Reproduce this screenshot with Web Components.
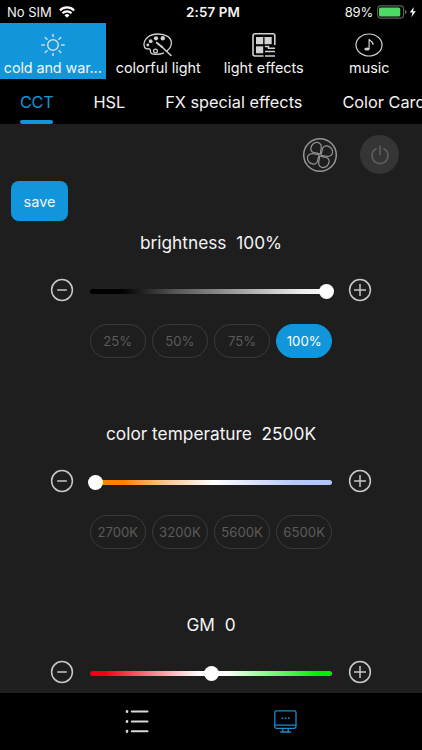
<!DOCTYPE html>
<html lang="en">
<head>
<meta charset="utf-8">
<meta name="viewport" content="width=device-width, initial-scale=1">
<title>Light Control</title>
<style>
  html, body { margin: 0; height: 100%; background: #000; }
  body {
    font-family: Inter, Roboto, "Liberation Sans", sans-serif;
    color: #f4f4f4;
    --accent: #1296db;
    --panel: #1e1e1e;
    overflow: hidden;
  }
</style>
</head>
<body>
<light-app></light-app>

<script>
// Shared icons
const icons = {
  sun: `<svg width="26" height="24" viewBox="0 0 26 24" fill="none" stroke="#cfdde6" stroke-width="1.5" stroke-linecap="round">
    <circle cx="13" cy="12" r="5.3"/>
    <path d="M13 1.6v2M13 20.4v2M1.8 12h2.6M21.6 12h2.6M5.2 4.5l1.8 1.7M19 17.8l1.8 1.7M5.2 19.5l1.8-1.7M19 6.2l1.8-1.7"/></svg>`,
  palette: `<svg width="30" height="24" viewBox="0 0 30 24" fill="none" stroke="#d2d2d2" stroke-width="1.3" stroke-linecap="round">
    <path d="M23.5 18.3C26 16.3 28.4 13.5 28.4 10 28.4 4.4 22.7 1 15 1 7 1 1 5.3 1 11.6c0 2.6 1.3 4.4 3.3 4.2 2.4-.3 3.3.7 3.1 2.4-.3 2.3 2 3.2 5.2 3.2 3.6 0 5.8-.3 8-1.2"/>
    <g fill="#d2d2d2" stroke="none"><circle cx="13" cy="5.3" r="2.1"/><circle cx="19.8" cy="5.3" r="2.2"/><circle cx="7.7" cy="8.2" r="1.9"/><circle cx="4.8" cy="12" r="1.4"/></g>
    <circle cx="12.5" cy="18" r="1.9"/><path d="M13.8 9.7l5.2 4.2" stroke-width="1.9"/><path d="M18.5 13.5l9.5 9" stroke-width="1.6"/></svg>`,
  grid: `<svg width="24" height="24" viewBox="0 0 24 24" fill="#d2d2d2">
    <path d="M11.5 23H3a2 2 0 0 1-2-2V2.800a2 2 0 0 1 2-2h18a1.800 1.800 0 0 1 1.800 1.800V12" fill="none" stroke="#d2d2d2" stroke-width="1.6"/>
    <rect x="4" y="4" width="7.2" height="7.2"/><rect x="12.5" y="4" width="7.2" height="7.2"/><rect x="4" y="13.3" width="7.2" height="7"/>
    <path d="M13 13.6h3.500v1.600h6.500M13 18.600h10M13 22.900h10" fill="none" stroke="#d2d2d2" stroke-width="1.5"/></svg>`,
  music: `<svg width="28" height="24" viewBox="0 0 28 24" fill="none" stroke="#d2d2d2" stroke-width="1.2">
    <ellipse cx="14" cy="12" rx="13" ry="11"/>
    <ellipse cx="12" cy="16" rx="2.7" ry="1.5" fill="#d2d2d2" stroke="none"/>
    <path d="M14.1 16V6.200c.5 2 4.600 1.800 3.800 5.600"/></svg>`,
  fan: `<svg width="36" height="36" viewBox="-18 -18 36 36" fill="none" stroke="#959595">
    <circle r="16.3" stroke-width="1.5"/>
    <g stroke-width="1.2"><circle r="1.3"/>
    ${[0, 90, 180, 270].map(a => `<path transform="rotate(${a})" d="M-1-1C-3-2.500-5-1.700-7.500-3-10.300-5-9.300-8.700-7-11-4-13.500-.3-13 1-10 2.300-6.500 0-5 .6-1.200"/>`).join('')}</g></svg>`,
  power: `<svg width="20" height="22" viewBox="0 0 20 22" fill="none" stroke="#5c5c5c" stroke-width="1.7" stroke-linecap="round">
    <path d="M6 4.700a8 8 0 1 0 8 0M10 2v8.500"/></svg>`,
  minus: `<svg width="24" height="24" viewBox="0 0 24 24" fill="none" stroke="#c8c8c8" stroke-width="1.5">
    <circle cx="12" cy="12" r="10.4"/><path d="M7.200 12h9.600"/></svg>`,
  plus: `<svg width="24" height="24" viewBox="0 0 24 24" fill="none" stroke="#c8c8c8" stroke-width="1.5">
    <circle cx="12" cy="12" r="10.4"/><path d="M6 12h12M12 6v12"/></svg>`,
  list: `<svg width="24" height="24" viewBox="0 0 24 24" fill="none" stroke="#d8d8d8" stroke-width="2" stroke-linecap="round">
    <path d="M6.800 2.500h15.700M6.800 12.500h15.700M6.800 22.300h15.700"/><path d="M2 2.200v.6M2 12.200v.6M2 22v.6" stroke-width="2.6"/></svg>`,
  monitor: `<svg width="24" height="24" viewBox="0 0 24 24" fill="none" stroke="#1c8ccb" stroke-width="1.3">
    <rect x=".8" y="1.8" width="21.2" height="17.6" rx="1.8"/>
    <path d="M.8 16.200h21.200M8.800 19.500v3.200M14.200 19.500v3.200M6.300 23h10.500"/>
    <path d="M7.500 9.300h1.700M10.700 9.300h1.700M13.900 9.300h1.700" stroke-width="1.5"/></svg>`
};

// iOS style status line
class StatusBar extends HTMLElement {
  constructor() {
    super();
    this.attachShadow({ mode: 'open' });
  }

  connectedCallback() {
    this.shadowRoot.innerHTML = `
      <style>
        :host {
          display: grid;
          grid-template-columns: 1fr auto 1fr;
          align-items: center;
          height: 23px;
          padding: 1px 5px 0 7px;
          box-sizing: border-box;
          font-size: 13px;
          line-height: 22px;
        }
        div { display: flex; align-items: center; }
        .left { gap: 7px; }
        .time { font-weight: 600; font-size: 13.4px; letter-spacing: .1px; margin-left: 2px; }
        .right { justify-content: flex-end; gap: 4px; letter-spacing: -.2px; }
        svg { display: block; }
      </style>
      <div class="left"><span>No SIM</span>
        <svg width="16" height="12" viewBox="0 0 16 12" fill="none" stroke="#fff" stroke-width="2.2">
          <path d="M.9 4.400a10 10 0 0 1 14.200 0M3.500 7.200a6.400 6.400 0 0 1 9 0"/>
          <path d="M8 11.700L5.500 9.200a3.600 3.600 0 0 1 5 0Z" fill="#fff" stroke="none"/></svg>
      </div>
      <div class="time">2:57 PM</div>
      <div class="right"><span>89%</span>
        <svg width="40" height="14" viewBox="0 0 40 14">
          <rect x=".6" y=".9" width="26" height="12.2" rx="3.3" fill="none" stroke="#626262" stroke-width="1.1"/>
          <rect x="2" y="2.4" width="21.3" height="9.2" rx="1.7" fill="#4cd964"/>
          <path d="M28 4.800q1.700.6 1.700 2.200t-1.700 2.200Z" fill="#626262"/>
          <path d="M36.800 2L32.800 7.600h2.700L34.300 12.300 38.800 6.200h-2.700Z" fill="#fff"/></svg>
      </div>`;
  }
}

// Main category tab
class ModeTab extends HTMLElement {
  constructor() {
    super();
    this.attachShadow({ mode: 'open' });
  }

  connectedCallback() {
    this.shadowRoot.innerHTML = `
      <style>
        :host {
          display: flex;
          flex-direction: column;
          align-items: center;
          box-sizing: border-box;
          height: 56px;
          padding-top: 10px;
          font-size: 14.4px;
          line-height: 20px;
          white-space: nowrap;
          cursor: pointer;
        }
        :host([active]) { background: var(--accent); letter-spacing: -.1px; }
        svg { display: block; }
        span { margin-top: 1px; }
      </style>
      ${icons[this.getAttribute('icon')]}
      <span><slot></slot></span>`;
  }
}

// Text tab with underline
class SubTab extends HTMLElement {
  constructor() {
    super();
    this.attachShadow({ mode: 'open' });
  }

  connectedCallback() {
    this.shadowRoot.innerHTML = `
      <style>
        :host {
          display: flex;
          flex: none;
          flex-direction: column;
          justify-content: space-between;
          height: 45px;
          font-size: 16.3px;
          line-height: 46px;
          white-space: nowrap;
          cursor: pointer;
        }
        span { height: 41px; }
        i { height: 4px; border-radius: 2px; background: transparent; }
        :host([active]) { color: var(--accent); letter-spacing: -.3px; }
        :host([active]) i { background: var(--accent); }
      </style>
      <span><slot></slot></span><i></i>`;
  }
}

class PresetPill extends HTMLElement {
  constructor() {
    super();
    this.attachShadow({ mode: 'open' });
  }

  connectedCallback() {
    this.shadowRoot.innerHTML = `
      <style>
        :host {
          display: grid;
          place-content: center;
          box-sizing: border-box;
          height: 34px;
          border: 1px solid #3b3b3b;
          border-radius: 17px;
          color: #5b5b5b;
          font-size: 13.2px;
          cursor: pointer;
        }
        :host([active]) {
          background: var(--accent);
          border-color: var(--accent);
          color: #fff;
        }
      </style>
      <slot></slot>`;
  }
}

// Title, -/+ buttons, gradient track and optional presets
class SliderControl extends HTMLElement {
  constructor() {
    super();
    this.attachShadow({ mode: 'open' });
  }

  connectedCallback() {
    this.shadowRoot.innerHTML = `
      <style>
        :host { display: block; flex: none; height: 191px; }
        .title {
          height: 24px;
          padding-top: 10px;
          font-size: 17.3px;
          line-height: 24px;
          text-align: center;
          white-space: pre;
        }
        .row {
          display: grid;
          grid-template-columns: 24px 242px 24px;
          column-gap: 16px;
          justify-content: center;
          align-items: center;
          margin-top: 23px;
        }
        svg { display: block; }
        .track {
          position: relative;
          height: 5px;
          margin-top: 2px;
          border-radius: 3px;
          background: linear-gradient(90deg, ${this.getAttribute('colors')});
        }
        .thumb {
          position: absolute;
          top: -5px;
          left: ${this.getAttribute('at')}px;
          width: 15px;
          height: 15px;
          margin-left: -7.5px;
          border-radius: 50%;
          background: #fff;
        }
        .presets {
          display: grid;
          grid-template-columns: repeat(4, 1fr);
          gap: 6.5px;
          width: 242px;
          margin: 22px auto 0;
        }
      </style>
      <div class="title">${this.getAttribute('label')}  ${this.getAttribute('value')}</div>
      <div class="row">${icons.minus}<div class="track"><div class="thumb"></div></div>${icons.plus}</div>
      <div class="presets"><slot></slot></div>`;
  }
}

class BottomNav extends HTMLElement {
  constructor() {
    super();
    this.attachShadow({ mode: 'open' });
  }

  connectedCallback() {
    this.shadowRoot.innerHTML = `
      <style>
        :host {
          display: flex;
          justify-content: center;
          gap: 125px;
          height: 57px;
          padding-top: 16px;
          box-sizing: border-box;
          background: #000;
        }
      </style>
      ${icons.list}${icons.monitor}`;
  }
}

class LightApp extends HTMLElement {
  constructor() {
    super();
    this.attachShadow({ mode: 'open' });
  }

  connectedCallback() {
    this.shadowRoot.innerHTML = `
      <style>
        :host {
          display: grid;
          grid-template-rows: 23px 56px 45px 1fr 57px;
          grid-template-columns: 100%;
          height: 100vh;
          overflow: hidden;
        }
        .modes { display: grid; grid-template-columns: repeat(4, 1fr); }
        .subs { display: flex; gap: 40px; padding-left: 20px; overflow: hidden; }
        main {
          display: flex;
          flex-direction: column;
          min-height: 0;
          overflow: hidden;
          background: var(--panel);
        }
        .tools {
          display: flex;
          flex: none;
          justify-content: flex-end;
          align-items: center;
          gap: 22px;
          height: 57px;
          padding: 4px 23px 0 0;
          box-sizing: border-box;
        }
        .tools svg { display: block; }
        .power {
          display: grid;
          place-content: center;
          width: 39px;
          height: 39px;
          border-radius: 50%;
          background: #353535;
        }
        button {
          flex: none;
          align-self: flex-start;
          width: 57px;
          height: 40px;
          margin-left: 11px;
          padding: 0;
          border: none;
          border-radius: 8px;
          background: var(--accent);
          color: #f4f4f4;
          font: 14.5px Inter, Roboto, sans-serif;
        }
      </style>
      <status-bar></status-bar>
      <div class="modes">
        <mode-tab icon="sun" active>cold and war...</mode-tab>
        <mode-tab icon="palette">colorful light</mode-tab>
        <mode-tab icon="grid">light effects</mode-tab>
        <mode-tab icon="music">music</mode-tab>
      </div>
      <div class="subs">
        <sub-tab active>CCT</sub-tab>
        <sub-tab>HSL</sub-tab>
        <sub-tab>FX special effects</sub-tab>
        <sub-tab>Color Card</sub-tab>
      </div>
      <main>
        <div class="tools">${icons.fan}<div class="power">${icons.power}</div></div>
        <button>save</button>
        <slider-control label="brightness" value="100%" at="236" colors="#000 0%, #000 13%, #555 35%, #eee 88%, #fff">
          <preset-pill>25%</preset-pill><preset-pill>50%</preset-pill><preset-pill>75%</preset-pill><preset-pill active>100%</preset-pill>
        </slider-control>
        <slider-control label="color temperature" value="2500K" at="5.5" colors="#ff8000 0%, #ff8000 14%, #f9b878 27%, #fff 51%, #b8c8f8 84%, #b0c4ff">
          <preset-pill>2700K</preset-pill><preset-pill>3200K</preset-pill><preset-pill>5600K</preset-pill><preset-pill>6500K</preset-pill>
        </slider-control>
        <slider-control label="GM" value="0" at="121.5" colors="#f00015 0%, #f00015 6%, #fff 45%, #fff 56%, #00f000 94%"></slider-control>
      </main>
      <bottom-nav></bottom-nav>`;
  }
}

customElements.define('status-bar', StatusBar);
customElements.define('mode-tab', ModeTab);
customElements.define('sub-tab', SubTab);
customElements.define('preset-pill', PresetPill);
customElements.define('slider-control', SliderControl);
customElements.define('bottom-nav', BottomNav);
customElements.define('light-app', LightApp);
</script>
</body>
</html>
